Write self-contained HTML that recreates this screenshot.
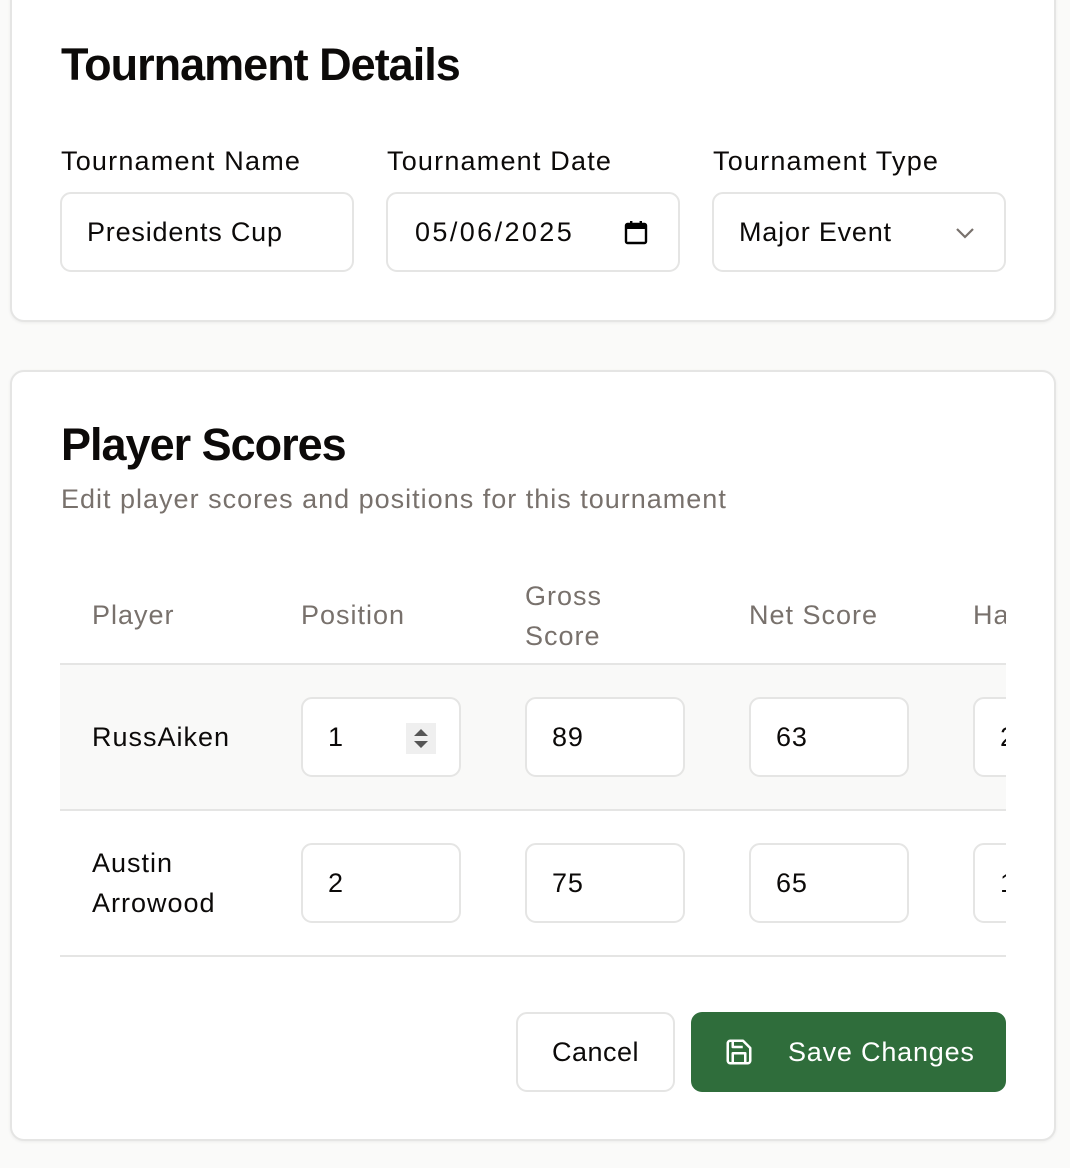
<!DOCTYPE html>
<html><head><meta charset="utf-8"><style>
*{box-sizing:border-box;margin:0;padding:0}
body{width:1070px;height:1168px;background:#fafaf9;font-family:"Liberation Sans",sans-serif;color:#0c0a09;position:relative;overflow:hidden}
.a{position:absolute}
.card{position:absolute;background:#fff;border:2px solid #e5e5e4;border-radius:14px;box-shadow:0 1px 3px rgba(0,0,0,.06)}
.h1{font-size:45px;font-weight:bold;letter-spacing:-1px;white-space:nowrap}
.lbl{font-size:27px;letter-spacing:1.2px;white-space:nowrap}
.inp{position:absolute;border:2px solid #e5e5e4;border-radius:11px;background:#fff;font-size:27px;letter-spacing:0.8px;padding-left:25px;display:flex;align-items:center;white-space:nowrap;overflow:hidden}
.th{font-size:27px;letter-spacing:1px;color:#78716c;white-space:nowrap}
.td{font-size:27px;letter-spacing:1px;white-space:nowrap}
.line{position:absolute;left:60px;width:946px;height:2px;background:#e5e5e4}
</style></head><body>
<div class="card" style="left:10px;top:-20px;width:1046px;height:342px"></div>
<div class="a h1" style="left:61px;top:39px">Tournament Details</div>
<div class="a lbl" style="left:61px;top:146px">Tournament Name</div>
<div class="a lbl" style="left:387px;top:146px">Tournament Date</div>
<div class="a lbl" style="left:713px;top:146px">Tournament Type</div>
<div class="inp" style="left:60px;top:192px;width:294px;height:80px">Presidents Cup</div>
<div class="inp" style="left:386px;top:192px;width:294px;height:80px;padding-left:27px;letter-spacing:2.4px">05/06/2025
<svg class="a" style="left:236px;top:26px" width="24" height="26" viewBox="0 0 24 26"><rect x="2" y="4" width="20" height="19" rx="1.5" fill="none" stroke="#000" stroke-width="2.4"/><rect x="2" y="4" width="20" height="5" fill="#000"/><rect x="6" y="1" width="2.4" height="5" fill="#000"/><rect x="15.6" y="1" width="2.4" height="5" fill="#000"/></svg></div>
<div class="inp" style="left:712px;top:192px;width:294px;height:80px">Major Event
<svg class="a" style="left:240px;top:32px" width="22" height="14" viewBox="0 0 22 14"><path d="M3 3l8 8 8-8" fill="none" stroke="#78716c" stroke-width="2.2"/></svg></div>

<div class="card" style="left:10px;top:370px;width:1046px;height:771px"></div>
<div class="a h1" style="left:61px;top:419px">Player Scores</div>
<div class="a" style="left:61px;top:484px;font-size:27px;letter-spacing:1px;color:#78716c;white-space:nowrap">Edit player scores and positions for this tournament</div>

<div class="a th" style="left:92px;top:600px">Player</div>
<div class="a th" style="left:301px;top:600px">Position</div>
<div class="a th" style="left:525px;top:576px;line-height:40px">Gross<br>Score</div>
<div class="a th" style="left:749px;top:600px">Net Score</div>
<div class="a" style="left:973px;top:600px;width:33px;overflow:hidden"><span class="th">Handicap</span></div>

<div class="line" style="top:663px"></div>
<div class="a" style="left:60px;top:665px;width:946px;height:144px;background:#f9f9f8"></div>
<div class="line" style="top:809px"></div>
<div class="line" style="top:955px"></div>

<div class="a td" style="left:92px;top:722px">RussAiken</div>
<div class="inp" style="left:301px;top:697px;width:160px;height:80px">1
<div class="a" style="left:103px;top:24px;width:30px;height:31px;background:#efefef"><svg width="30" height="31" viewBox="0 0 30 31"><path d="M15 6l7 7H8z M15 25l7-7H8z" fill="#555"/></svg></div></div>
<div class="inp" style="left:525px;top:697px;width:160px;height:80px">89</div>
<div class="inp" style="left:749px;top:697px;width:160px;height:80px">63</div>
<div class="a" style="left:973px;top:697px;width:33px;height:80px;overflow:hidden"><div class="inp" style="left:0;top:0;width:160px;height:80px">2</div></div>

<div class="a td" style="left:92px;top:843px;line-height:40px">Austin<br>Arrowood</div>
<div class="inp" style="left:301px;top:843px;width:160px;height:80px">2</div>
<div class="inp" style="left:525px;top:843px;width:160px;height:80px">75</div>
<div class="inp" style="left:749px;top:843px;width:160px;height:80px">65</div>
<div class="a" style="left:973px;top:843px;width:33px;height:80px;overflow:hidden"><div class="inp" style="left:0;top:0;width:160px;height:80px">1</div></div>

<div class="a" style="left:516px;top:1012px;width:159px;height:80px;border:2px solid #e5e5e4;border-radius:11px;background:#fff;font-size:27px;letter-spacing:0.5px;display:flex;align-items:center;justify-content:center">Cancel</div>
<div class="a" style="left:691px;top:1012px;width:315px;height:80px;border-radius:11px;background:#2f6d3b;color:#fff;font-size:27px;letter-spacing:0.8px;display:flex;align-items:center">
<svg style="position:absolute;left:33px;top:25px" width="30" height="30" viewBox="0 0 24 24"><path d="M5 3h10.2L21 8.8V19a2 2 0 0 1-2 2H5a2 2 0 0 1-2-2V5a2 2 0 0 1 2-2z M7 21v-8h10v8 M7 3v5h8" fill="none" stroke="#fff" stroke-width="2" stroke-linejoin="round"/></svg>
<span style="position:absolute;left:97px">Save Changes</span></div>
</body></html>
